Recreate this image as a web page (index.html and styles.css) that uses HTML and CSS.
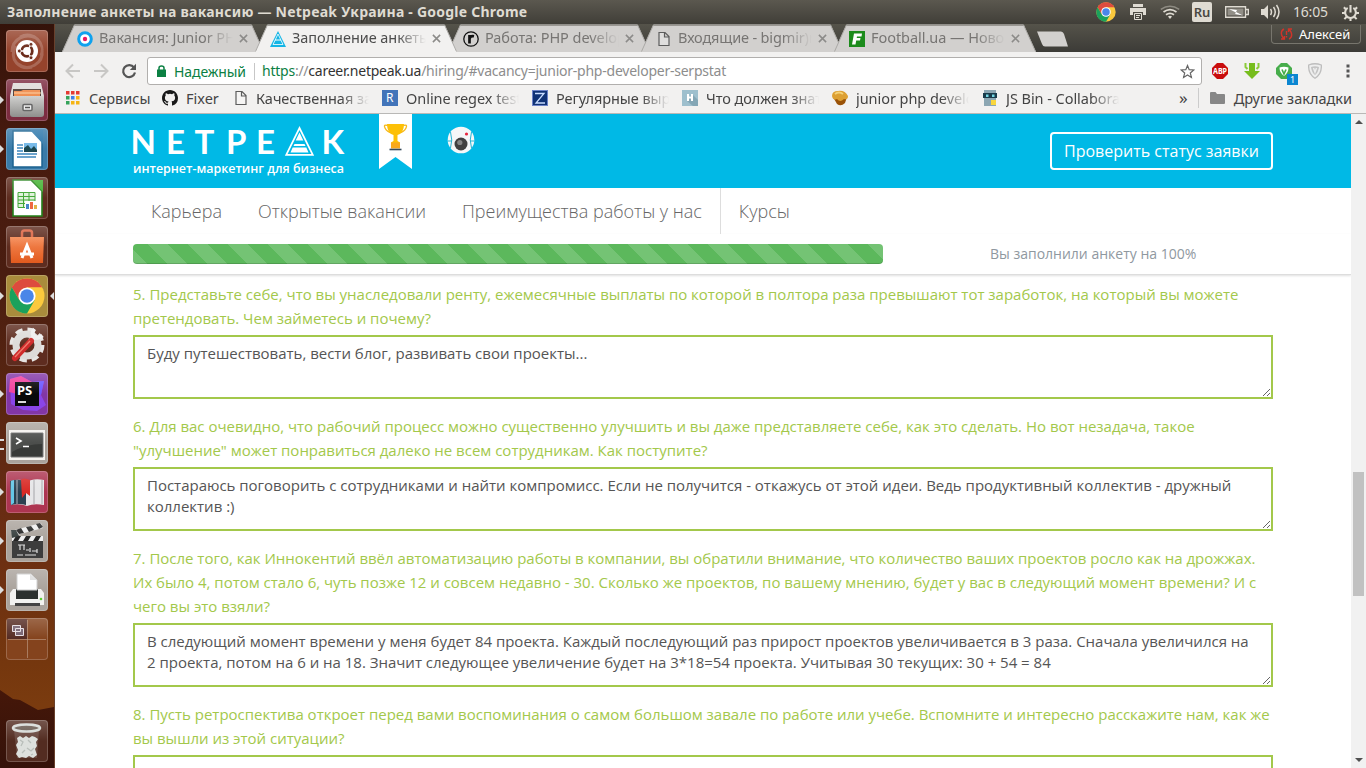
FILE: index.html
```html
<!DOCTYPE html>
<html lang="ru">
<head>
<meta charset="utf-8">
<title>Заполнение анкеты на вакансию — Netpeak Украина</title>
<link rel="stylesheet" href="styles.css">
</head>
<body>
<svg class="defs" width="0" height="0">
  <defs>
    <linearGradient id="steel" x1="0" y1="0" x2="0" y2="1"><stop offset="0" stop-color="#d0d0ce"/><stop offset="1" stop-color="#8f8f8d"/></linearGradient>
    <linearGradient id="bag" x1="0" y1="0" x2="0" y2="1"><stop offset="0" stop-color="#f58a55"/><stop offset="1" stop-color="#e25a1e"/></linearGradient>
    <symbol id="chrome" viewBox="0 0 36 36">
      <circle cx="18" cy="18" r="17.5" fill="#fbc93d"/>
      <path d="M2.8 9.3A17.5 17.5 0 0 1 33.2 9.3H18L10.4 22.3Z" fill="#dd4b3e"/>
      <path d="M2.8 9.3A17.5 17.5 0 0 0 18 35.5L25.6 22.3H10.4Z" fill="#1ba15c"/>
      <circle cx="18" cy="18" r="8.6" fill="#fff"/><circle cx="18" cy="18" r="6.8" fill="#4a86e8"/>
    </symbol>
    <symbol id="tabshape" viewBox="0 0 202 28"><path d="M0 28 12 1.5H190L202 28Z" fill="currentColor"/><path d="M.5 27.5 12.5.8H189.5L201.5 27.5" fill="none" stroke="#aaa8a5"/></symbol>
    <symbol id="close" viewBox="0 0 10 10"><path d="M1 1 9 9M9 1 1 9" stroke="#8c8b89" stroke-width="1.7"/></symbol>
    <symbol id="page" viewBox="0 0 12 16"><path d="M1 1.5H7L11 5.5V14.5H1ZM6.5 1.5V6H11" fill="#fff" fill-opacity=".3" stroke="#5c5c5c" stroke-width="1.2"/></symbol>
  </defs>
</svg>

<header class="panel">
  <span class="panel-title">Заполнение анкеты на вакансию — Netpeak Украина - Google Chrome</span>
  <div class="indicators">
    <svg width="20" height="20"><use href="#chrome"/></svg>
    <svg class="ind-print" width="16" height="16" viewBox="0 0 16 16"><path d="M3 0H13V3H3ZM0 4H16V11H13V8H3V11H0Z" fill="#dfdbd2"/><path d="M4.500 9.500H11.500V15.500H4.500ZM6 11.500H10M6 13.500H9" fill="none" stroke="#dfdbd2"/></svg>
    <svg class="ind-wifi" width="20" height="14" viewBox="0 0 20 14"><path d="M8 11.500 10 14 12 11.500Q10 10 8 11.500Z" fill="#dfdbd2"/><path d="M6 9.800Q10 6.800 14 9.800M3.500 7Q10 2.300 16.500 7" fill="none" stroke="#dfdbd2" stroke-width="1.700"/><path d="M.8 4.300Q10-2 19.200 4.300" fill="none" stroke="#8e8b82" stroke-width="1.500"/></svg>
    <span class="ind-lang">Ru</span>
    <svg class="ind-bat" width="24" height="12" viewBox="0 0 24 12"><path d="M.7.700H20.500V11.300H.7ZM21 3.500H23.300V8.500H21" fill="none" stroke="#dfdbd2" stroke-width="1.400"/><path d="M2.500 2.500H18.500V9.500H2.500Z" fill="#928f87"/><path d="M4 3 12 4 11 6 18 9.500 10 8 11 6.500Z" fill="#fff"/></svg>
    <svg class="ind-vol" width="20" height="16" viewBox="0 0 20 16"><path d="M0 5H3L7 1V15L3 11H0Z" fill="#dfdbd2"/><path d="M9.500 5Q11.500 8 9.500 11M12.500 3Q16 8 12.500 13M15.500 1Q20.500 8 15.500 15" fill="none" stroke="#dfdbd2" stroke-width="1.500"/></svg>
    <span class="ind-clock">16:05</span>
    <svg class="ind-gear" width="17" height="17" viewBox="0 0 18 18"><path d="M6 4.200A5.700 5.700 0 1 0 12 4.200" fill="none" stroke="#dfdbd2" stroke-width="2.200"/><path d="M9 1V9M2 3.500 4.500 6M16 3.500 13.500 6M0 9.500H3.500M14.500 9.500H18M2.500 16 5 13.500M15.500 16 13 13.500M9 15V18" stroke="#dfdbd2" stroke-width="2.200"/></svg>
  </div>
</header>

<div class="desktop">
<nav class="launcher">
  <div class="tile t-dash"><svg viewBox="0 0 42 42"><path d="M6 22C6 8 20 3 30 8M36 20C38 34 22 42 12 34M14 7C28 0 40 14 35 26M10 16C2 30 14 40 26 37" fill="none" stroke="#fff" stroke-opacity=".2" stroke-width="3"/><circle cx="21" cy="21" r="11" fill="#fff"/><circle cx="21" cy="21" r="5.300" fill="none" stroke="#6b2b1b" stroke-width="2.800"/><path d="M21 21 10 21M21 21 26.500 12M21 21 26.500 30" stroke="#fff" stroke-width="1.300"/><circle cx="13.300" cy="21" r="1.900" fill="#6b2b1b" stroke="#fff" stroke-width=".8"/><circle cx="25" cy="14.300" r="1.900" fill="#6b2b1b" stroke="#fff" stroke-width=".8"/><circle cx="25" cy="27.700" r="1.900" fill="#6b2b1b" stroke="#fff" stroke-width=".8"/></svg></div>
  <div class="tile t-files run"><svg viewBox="0 0 42 42"><path d="M7 4H35L38 17H4Z" fill="#dedcd9"/><path d="M7 10H35V19H7Z" fill="#4b3932"/><path d="M8 12H15L17 11H34V19H8Z" fill="#ef8a4a"/><path d="M8 14H35" stroke="#ffd0a0"/><path d="M4 17H38V35Q38 38 35 38H7Q4 38 4 35Z" fill="url(#steel)"/><rect x="17" y="25.500" width="9" height="6" rx="1" fill="#eee" stroke="#666" stroke-width="1.500"/><path d="M19 28.500H24" stroke="#555" stroke-width="1.500"/></svg></div>
  <div class="tile t-writer run"><svg viewBox="0 0 42 42"><path d="M7 3H27L36 13V39H7Z" fill="#fff" stroke="#1d6390" stroke-width="1.500"/><path d="M24 2H37V16Z" fill="#2f79ac"/><path d="M11 17H17M11 20H17M11 23H17M11 26H31M11 29H30" stroke="#3d87bd" stroke-width="1.700"/><path d="M18 15H31V24H18Z" fill="#74b8e8"/><path d="M18 24V20L22 17 25 21 28 18 31 22V24Z" fill="#1b4750"/></svg></div>
  <div class="tile t-dark"><svg viewBox="0 0 42 42"><path d="M7 3H25L36 14V39H7Z" fill="#fff" stroke="#238119" stroke-width="1.600"/><path d="M26 3H37V15Z" fill="#44b233"/><path d="M12 15.500H29V30.500H12ZM12 19.500H29M12 23H29M12 26.500H29M17.500 15V31M23 15V31" fill="#dff2da" stroke="#43a736"/><path d="M19 24H31V32H19Z" fill="#fff"/><path d="M20 27H23V32H20Z" fill="#4787c7"/><path d="M24 25H27V32H24Z" fill="#ed6841"/><path d="M28 28H31V32H28Z" fill="#e1b345"/></svg></div>
  <div class="tile t-dark"><svg viewBox="0 0 42 42"><path d="M16 13V7Q16 4.500 18.500 4.500H23.500Q26 4.500 26 7V13" fill="none" stroke="#dc6240" stroke-width="2.500"/><path d="M4 11H38L37 37H5Z" fill="url(#bag)"/><path d="M16 32 21 19.500 26 32M14 28H28" fill="none" stroke="#fff" stroke-width="3"/></svg></div>
  <div class="tile t-chrome run active"><svg viewBox="0 0 42 42"><use href="#chrome" x="3" y="3" width="36" height="36"/></svg></div>
  <div class="tile t-dark"><svg viewBox="0 0 42 42"><circle cx="21" cy="21" r="15" fill="none" stroke="#e6e4e2" stroke-width="5" stroke-dasharray="7 4.780"/><circle cx="21" cy="21" r="11" fill="none" stroke="#dddbd9" stroke-width="7"/><path d="M24 17 30 11" stroke="#eee" stroke-width="5"/><path d="M28.500 5Q25 9 28 12.500T36.500 11.500" fill="none" stroke="#eee" stroke-width="4"/><path d="M9 34 25 17" stroke="#cf2a2a" stroke-width="6" stroke-linecap="round"/><path d="M9 33 24 17" stroke="#ef7c6c" stroke-width="1.300"/></svg></div>
  <div class="tile t-storm run"><svg viewBox="0 0 42 42"><path d="M4 6 15 3 26 9 38 8 35 22 40 32 31 38 17 37 5 31Z" fill="#8a45e8"/><path d="M4 6 15 3 26 9 15 22 3 19Z" fill="#f0409d"/><path d="M26 9 38 8 35 22 26 20Z" fill="#6b57ff"/><path d="M9 9H33V33H9Z" fill="#08080a"/><path d="M12 29H20" stroke="#fff" stroke-width="1.700"/><text x="11" y="21.500" class="storm-text">PS</text></svg></div>
  <div class="tile t-light run2"><svg viewBox="0 0 42 42"><path d="M3 8H39V38H3Z" fill="#f5f3ef"/><path d="M5 11H37V35H5Z" fill="#383a38" stroke="#777"/><path d="M6 12H36V22Q20 22 6 30Z" fill="#fff" fill-opacity=".1"/><path d="M10 16 15 19 10 22M17 24.500H23" fill="none" stroke="#fff" stroke-width="1.600"/></svg></div>
  <div class="tile t-red run"><svg viewBox="0 0 42 42"><path d="M4 10Q16 7 21 11Q27 7 38 9V34Q28 32 21 35Q14 32 5 34Z" fill="#e6e6e8"/><path d="M4 10Q14 7 20 11V34Q13 32 5 34Z" fill="#2b4050"/><path d="M5 10 8 9V32L5 34Z" fill="#65c7e7"/><path d="M11 9V33" stroke="#87929c" stroke-width="1.500"/><path d="M28 9V33M36 9V33" stroke="#c5c5c8" stroke-width="2"/><path d="M15 9Q17 6 24 9V25L20 22 16 27Z" fill="#d92a25"/></svg></div>
  <div class="tile t-light run"><svg viewBox="0 0 42 42"><path d="M6 17H37V38H6Z" fill="#3d3d3d"/><path d="M5 11 35 3 37 8 7 16Z" fill="#eee"/><path d="M10 10 15 8 18 13 13 14ZM20 7 25 6 28 10 23 12ZM30 4 34 3 37 7 33 9Z" fill="#222"/><path d="M6 16H37V21H6Z" fill="#eee"/><path d="M10 16H15L12 21H7ZM20 16H25L22 21H17ZM30 16H35L32 21H27Z" fill="#222"/><path d="M12 25H19M14 25V30M18 25V30M20 30H23M24 28V32M26 31H31M31 29V33M11 35H17M19 35H30" fill="none" stroke="#ddd" stroke-width="1.200"/><path d="M5 10H10L13 16 6 18Z" fill="#353d3c"/></svg></div>
  <div class="tile t-light run"><svg viewBox="0 0 42 42"><path d="M7 20H35L38 24V36H4V24Z" fill="#f2f2f0"/><path d="M10 20H32V30H10Z" fill="#2b302e"/><path d="M11 5H25L31 11V21H11Z" fill="#fff" stroke="#ccc"/><path d="M24 5V11H31Z" fill="#ddd"/><path d="M9 35.500H34" stroke="#444" stroke-width="3"/><circle cx="35" cy="30" r="1.300" fill="#5cd133"/></svg></div>
  <div class="tile t-ws"><svg viewBox="0 0 42 42"><path d="M1 1H21V21H1Z" fill="#422126" fill-opacity=".7"/><path d="M21.500 2V40M2 21.500H40" stroke="#c1a18c" stroke-opacity=".6"/><path d="M6.500 7.500H14.500V13.500H6.500ZM9.500 10.500H17.500V17.500H9.500Z" fill="#756170" stroke="#e5dde2"/></svg></div>
  <div class="tile t-trash"><svg viewBox="0 0 42 42"><path d="M8 10H33L31 38H11Z" fill="#e3e7e4" fill-opacity=".15"/><ellipse cx="20.500" cy="8" rx="13.500" ry="3.500" fill="#6a5b52" stroke="#d7dbd8" stroke-width="2.500"/><path d="M11 18 14 16 17 18 20 16 23 18 26 16 29 17 32 19 30 22 31 26 29 29 31 35 27 38 23 36 20 38 16 37 13 38 10 34 12 30 10 25 12 22Z" fill="#dde0dd"/><path d="M14 20 17 22 15 26M22 20 25 23M28 28 25 31 21 28M16 33 19 30M25 35 27 34" fill="none" stroke="#b9beba" stroke-width="1.300"/></svg></div>
</nav>

<main class="window">
  <div class="tabstrip">
    <div class="tab"><svg class="tab-bg"><use href="#tabshape"/></svg>
      <svg class="fav" viewBox="0 0 16 16"><circle cx="8" cy="8" r="6.300" fill="#fff" stroke="#0fa1ee" stroke-width="3"/><circle cx="8" cy="8" r="2.200" fill="#ec1863"/></svg>
      <span class="tab-label">Вакансия: Junior PHP</span><svg class="x"><use href="#close"/></svg></div>
    <div class="tab current"><svg class="tab-bg"><use href="#tabshape"/></svg>
      <svg class="fav" viewBox="0 0 16 16"><path d="M8 0 16 16H0Z" fill="#13b5e5"/><path d="M8 3 3 13.500H13Z" fill="none" stroke="#fff" stroke-width=".8"/><path d="M5 9H11" stroke="#fff"/></svg>
      <span class="tab-label">Заполнение анкеты</span><svg class="x"><use href="#close"/></svg></div>
    <div class="tab"><svg class="tab-bg"><use href="#tabshape"/></svg>
      <svg class="fav" viewBox="0 0 16 16"><circle cx="8" cy="8" r="7.200" fill="#d2d0ce" stroke="#111" stroke-width="1.300"/><path d="M6.500 12.500V4M6.500 7.500Q7.500 4.500 11 5.200" fill="none" stroke="#111" stroke-width="2.700"/></svg>
      <span class="tab-label">Работа: PHP developer</span><svg class="x"><use href="#close"/></svg></div>
    <div class="tab"><svg class="tab-bg"><use href="#tabshape"/></svg>
      <svg class="fav"><use href="#page"/></svg>
      <span class="tab-label wide">Входящие - bigmir)net</span><svg class="x"><use href="#close"/></svg></div>
    <div class="tab"><svg class="tab-bg"><use href="#tabshape"/></svg>
      <svg class="fav" viewBox="0 0 16 16"><path d="M0 0H16V16H0Z" fill="#1c8b1b"/><path d="M5 2.500H13L12.500 5.500H8L7.700 7H11.500L11 9.500H7.200L6.500 13.500H3Z" fill="#fff"/></svg>
      <span class="tab-label">Football.ua — Новости</span><svg class="x"><use href="#close"/></svg></div>
    <svg class="newtab" viewBox="0 0 34 16"><path d="M1 .5H25Q27 .5 28 3L32 15.500H9Q7 15.500 6 13Z" fill="#d2d0ce"/></svg>
    <div class="profile"><svg width="13" height="12" viewBox="0 0 13 12"><path d="M4 1Q0 3 2 8L4 11M1 11H4.500V8M9 11Q13 9 11 4L9 1M12 1H8.500V4" fill="none" stroke="#d0342a" stroke-width="1.400"/><path d="M6.500 3V7M6.500 8V9.500" stroke="#d0342a" stroke-width="1.400"/></svg><span>Алексей</span></div>
  </div>

  <div class="toolbar">
    <svg class="nav-ic" width="16" height="16" viewBox="0 0 16 16"><path d="M15 8H2M8 1.500 1.500 8 8 14.500" fill="none" stroke="#c8c7c5" stroke-width="2"/></svg>
    <svg class="nav-ic" width="16" height="16" viewBox="0 0 16 16"><path d="M1 8H14M8 1.500 14.500 8 8 14.500" fill="none" stroke="#c8c7c5" stroke-width="2"/></svg>
    <svg class="nav-ic" width="16" height="16" viewBox="0 0 16 16"><path d="M13 4.500A6 6 0 1 0 14 9.500" fill="none" stroke="#555" stroke-width="2.200"/><path d="M15 .8V7H8.800Z" fill="#555"/></svg>
    <div class="omnibox">
      <svg class="lock" width="9" height="12" viewBox="0 0 9 12"><path d="M0 4.500H9V12H0Z" fill="#0b8043"/><path d="M2 5V3Q2 1 4.500 1T7 3V5" fill="none" stroke="#0b8043" stroke-width="1.500"/></svg>
      <span class="secure">Надежный</span>
      <span class="url"><span class="scheme">https</span>://<span class="host">career.netpeak.ua</span>/hiring/#vacancy=junior-php-developer-serpstat</span>
      <svg class="star" width="15" height="15" viewBox="0 0 15 15"><path d="M7.500 1.500 9.200 5.700 13.800 6 10.300 9 11.400 13.400 7.500 11 3.600 13.400 4.700 9 1.200 6 5.800 5.700Z" fill="none" stroke="#666" stroke-width="1.200"/></svg>
    </div>
    <div class="exts">
      <svg width="16" height="16" viewBox="0 0 16 16"><path d="M5 0H11L16 5V11L11 16H5L0 11V5Z" fill="#c90d0d"/><text x="1" y="11" class="abp" textLength="14" lengthAdjust="spacingAndGlyphs">ABP</text></svg>
      <svg width="16" height="16" viewBox="0 0 16 16"><path d="M5 0H11V8H16L8 16 0 8H5Z" fill="#77bd1d"/><path d="M1.500 0V4L3.500 6M14.500 0V4L12.500 6" fill="none" stroke="#8bcb39" stroke-width="2"/></svg>
      <div class="guard"><svg width="16" height="16" viewBox="0 0 16 16"><path d="M5 0H11L16 5V11L11 16H5L0 11V5Z" fill="#47ad4b"/><path d="M3.500 4.500Q8 3 12.500 4.500Q12.500 10 8 13Q3.500 10 3.500 4.500Z" fill="#fff"/><path d="M6 6.500 8 11 10 6.500" fill="none" stroke="#47ad4b" stroke-width="1.700"/></svg><b class="badge">1</b></div>
      <svg width="14" height="16" viewBox="0 0 14 16"><path d="M.7 2Q7-.5 13.300 2Q14 11 7 15.300Q0 11 .7 2Z" fill="#eee" stroke="#bdbdbd" stroke-width="1.300"/><path d="M3 4Q7 2.500 11 4Q10.500 9 7 12Q3.500 9 3 4Z" fill="#c3c3c3"/><path d="M5.500 5 7 9 8.500 5" fill="none" stroke="#eee" stroke-width="1.500"/></svg>
      <svg class="dots" width="4" height="14" viewBox="0 0 4 14"><path d="M.5.500H3.500V3.500H.5ZM.5 5.500H3.500V8.500H.5ZM.5 10.500H3.500V13.500H.5Z" fill="#555"/></svg>
    </div>
  </div>

  <div class="bookmarks">
    <div class="bm b1"><svg width="14" height="14" viewBox="0 0 14 14"><path d="M0 0H3.500V3.500H0ZM5 0H8.500V3.500H5ZM10 0H13.500V3.500H10Z" fill="#e53a32"/><path d="M0 5H3.500V8.500H0ZM0 10H3.500V13.500H0Z" fill="#35a35a"/><path d="M5 5H8.500V8.500H5Z" fill="#3f7fe8"/><path d="M10 5H13.500V8.500H10ZM10 10H13.500V13.500H10ZM5 10H8.500V13.500H5Z" fill="#f5b413"/></svg><span>Сервисы</span></div>
    <div class="bm b2"><svg width="16" height="16" viewBox="0 0 16 16"><path d="M8 0C3.580 0 0 3.580 0 8c0 3.540 2.290 6.530 5.470 7.590.4.070.55-.17.55-.38 0-.19-.01-.82-.01-1.490-2.010.37-2.530-.49-2.690-.94-.09-.23-.48-.94-.82-1.130-.28-.15-.68-.52-.01-.53.63-.01 1.080.58 1.230.82.720 1.210 1.870.87 2.330.66.070-.52.28-.87.510-1.070-1.780-.2-3.640-.89-3.640-3.950 0-.87.310-1.590.82-2.150-.08-.2-.36-1.020.08-2.120 0 0 .67-.21 2.200.82a7.600 7.600 0 0 1 4 0c1.530-1.040 2.200-.82 2.200-.82.44 1.100.16 1.920.08 2.120.510.560.82 1.270.82 2.150 0 3.070-1.870 3.750-3.650 3.950.29.250.54.730.54 1.480 0 1.070-.01 1.930-.01 2.200 0 .210.150.460.550.380A8 8 0 0 0 16 8c0-4.420-3.580-8-8-8Z" fill="#191919"/></svg><span>Fixer</span></div>
    <div class="bm b3 fade"><svg width="12" height="16"><use href="#page"/></svg><span>Качественная заг</span></div>
    <div class="bm b4 fade"><svg width="16" height="16" viewBox="0 0 16 16"><path d="M0 0H16V16H0Z" fill="#4274b9"/><text x="4" y="12" class="ic-txt">R</text></svg><span>Online regex test</span></div>
    <div class="bm b5 fade"><svg width="16" height="16" viewBox="0 0 16 16"><path d="M0 0H16V16H0Z" fill="#6d82c8"/><path d="M1 1H15V15H1Z" fill="#103276"/><path d="M3 3.500H12L4 13H13" fill="none" stroke="#c8dcff" stroke-width="1.300"/></svg><span>Регулярные выраж</span></div>
    <div class="bm b6 fade"><svg width="16" height="16" viewBox="0 0 16 16"><path d="M0 0H16V16H0Z" fill="#9ebfcd"/><path d="M10 4 16 10V16H11L5 11Z" fill="#84a6b5"/><path d="M6 4V11M10 4V11M6 7.500H10" stroke="#fff" stroke-width="2"/></svg><span>Что должен знать</span></div>
    <div class="bm b7 fade"><svg width="16" height="16" viewBox="0 0 16 16"><path d="M1 7 5 14Q9 17 13 13L15 7Z" fill="#9a5207"/><path d="M0 6Q0 1 6 1Q13 0 16 6Q16 10 12 9Q8 13 5 9Q1 11 0 6Z" fill="#dda032"/><path d="M3 4Q7 1 11 4" stroke="#f5d277" stroke-width="2" fill="none"/></svg><span>junior php develop</span></div>
    <div class="bm b8 fade"><svg width="14" height="16" viewBox="0 0 14 16"><path d="M1 0H13V16H1Z" fill="#8ca6b2"/><path d="M0 3H14V8H0Z" fill="#193b4a"/><path d="M3 4.500H5.500V7H3ZM9 4.500H11.500V7H9Z" fill="#75d8e6"/><path d="M8 10H13V15H8Z" fill="#f9d63d"/></svg><span>JS Bin - Collaborat</span></div>
    <span class="more">»</span>
    <div class="bm other"><svg width="15" height="12" viewBox="0 0 15 12"><path d="M0 1Q0 0 1 0H5.500L7 2H14Q15 2 15 3V11Q15 12 14 12H1Q0 12 0 11Z" fill="#878787"/></svg><span>Другие закладки</span></div>
  </div>

  <div class="viewport">
    <div class="site">
      <div class="site-header">
        <svg class="logo" width="212" height="52" viewBox="0 0 212 52">
          <text class="logo-text" y="30" x="-2.500 33 61.500 93 123">NETPE</text><text class="logo-text" y="30" x="188.500">K</text>
          <path d="M166.500 4 179.800 30.800H153.200Z" fill="none" stroke="#fff" stroke-width="1.700"/><path d="M166.500 8.500 170.300 16.500H162.700ZM161.500 20H171.500L172.500 22H160.500ZM159.700 23.500H173.300L175.500 28.500H157.500Z" fill="#fff"/>
          <text class="logo-tag" x="0" y="49" textLength="211" lengthAdjust="spacingAndGlyphs">интернет-маркетинг для бизнеса</text>
        </svg>
        <svg class="ribbon" width="33" height="55" viewBox="0 0 33 55"><path d="M0 0H33V55L16.500 43 0 55Z" fill="#fff"/><path d="M9 11.500Q4 10 6 14 8 18 13 19M24 11.500Q29 10 27 14 25 18 20 19" fill="none" stroke="#f6b91c" stroke-width="1.400"/><path d="M8 10H25Q25 19 18.500 21V27L21 28.500V34H12V28.500L14.500 27V21Q8 19 8 10Z" fill="#fdc006"/><path d="M12 28.500H21V34.500H12Z" fill="#f8a91d"/><path d="M10.500 35.500H22.500" stroke="#34495b" stroke-width="1.600"/></svg>
        <svg class="robot" width="28" height="28" viewBox="0 0 28 28"><circle cx="14" cy="14" r="13.300" fill="#f5f7f8"/><path d="M3.500 6Q6 14 3.500 22M24.500 6Q22 14 24.500 22M1 15H5M23 15H27" fill="none" stroke="#25b5d5"/><circle cx="14" cy="18" r="6.500" fill="#404040"/><circle cx="12.800" cy="16.500" r="2.600" fill="#848484"/><circle cx="19.500" cy="8" r="1.600" fill="#e8273f"/></svg>
        <a class="status-btn">Проверить статус заявки</a>
      </div>
      <div class="site-nav"><a>Карьера</a><a>Открытые вакансии</a><a>Преимущества работы у нас</a><a class="sep">Курсы</a></div>
      <div class="progress-row"><div class="bar"></div><span>Вы заполнили анкету на 100%</span></div>
      <div class="form">
        <label>5. Представьте себе, что вы унаследовали ренту, ежемесячные выплаты по которой в полтора раза превышают тот заработок, на который вы можете<br>претендовать. Чем займетесь и почему?</label>
        <textarea>Буду путешествовать, вести блог, развивать свои проекты...</textarea>
        <label>6. Для вас очевидно, что рабочий процесс можно существенно улучшить и вы даже представляете себе, как это сделать. Но вот незадача, такое<br>"улучшение" может понравиться далеко не всем сотрудникам. Как поступите?</label>
        <textarea>Постараюсь поговорить с сотрудниками и найти компромисс. Если не получится - откажусь от этой идеи. Ведь продуктивный коллектив - дружный
коллектив :)</textarea>
        <label>7. После того, как Иннокентий ввёл автоматизацию работы в компании, вы обратили внимание, что количество ваших проектов росло как на дрожжах.<br>Их было 4, потом стало 6, чуть позже 12 и совсем недавно - 30. Сколько же проектов, по вашему мнению, будет у вас в следующий момент времени? И с<br>чего вы это взяли?</label>
        <textarea>В следующий момент времени у меня будет 84 проекта. Каждый последующий раз прирост проектов увеличивается в 3 раза. Сначала увеличился на
2 проекта, потом на 6 и на 18. Значит следующее увеличение будет на 3*18=54 проекта. Учитывая 30 текущих: 30 + 54 = 84</textarea>
        <label>8. Пусть ретроспектива откроет перед вами воспоминания о самом большом завале по работе или учебе. Вспомните и интересно расскажите нам, как же<br>вы вышли из этой ситуации?</label>
        <textarea></textarea>
      </div>
    </div>
    <div class="scrollbar"><i class="up"></i><div class="thumb"></div><i class="down"></i></div>
  </div>
</main>
</div>
</body>
</html>
```
FILE: styles.css
```css
* { box-sizing: border-box; }
body { margin: 0; width: 1366px; height: 768px; overflow: hidden; display: flex; flex-direction: column; font-family: "Open Sans", "Noto Sans", sans-serif; }
svg { display: block; flex: none; }
.defs { position: absolute; }

.panel { height: 24px; flex: none; display: flex; align-items: center; justify-content: space-between; padding: 0 7px; background: linear-gradient(#5b584f, #403e38); color: #dfdbd2; font: 15px/24px "Noto Sans", sans-serif; white-space: nowrap; }
.panel-title { font-weight: 700; font-size: 14px; letter-spacing: .23px; }
.indicators { display: flex; align-items: center; }
.ind-print { margin-left: 14px; }
.ind-wifi { margin-left: 14px; }
.ind-lang { margin-left: 12px; width: 20px; height: 20px; border-radius: 2px; background: #dfdbd2; color: #4a4842; font-size: 13px; font-weight: 600; line-height: 20px; text-align: center; }
.ind-bat { margin-left: 13px; }
.ind-vol { margin-left: 12px; }
.ind-clock { margin-left: 12px; width: 36px; font-size: 14px; letter-spacing: -.2px; }
.ind-gear { margin-left: 13px; }

.desktop { flex: 1; display: flex; min-height: 0; }

.launcher { position: relative; z-index: 0; width: 55px; flex: none; display: flex; flex-direction: column; gap: 7px; padding: 6px 0 6px 6px; border-right: 1px solid #69402c; background: linear-gradient(to bottom, #34130a 0, #471a0e 120px, #4a1d10 250px, #592611 380px, #6a2d13 500px, #75370e 640px, #7a3b0f 680px); }
.launcher::after { content: ""; position: absolute; z-index: -1; left: 0; right: 0; bottom: 0; height: 78px; background: linear-gradient(#451709, #35120a); clip-path: polygon(0 0, 13px 9px, 20px 10px, 38px 20px, 54px 17px, 54px 100%, 0 100%); }
.tile { position: relative; width: 42px; height: 42px; flex: none; border-radius: 4px; box-shadow: inset 0 0 0 1px rgba(255,255,255,.2); }
.tile::after { content: ""; position: absolute; inset: 0; border-radius: 4px; background: linear-gradient(rgba(255,255,255,.2), rgba(255,255,255,0) 50%); }
.tile svg { width: 42px; height: 42px; }
.t-dash { background: #95432c; }
.t-files { background: #7c2c40; }
.t-writer { background: #397ba9; }
.t-dark { background: #5e2c1f; }
.t-chrome { background: #a98c3c; }
.t-storm { background: #8236a6; }
.t-light { background: #aaa39c; }
.t-red { background: #ad3551; }
.t-ws { background: #84431d; }
.t-trash { background: #532c21; margin-top: auto; }
.run::before, .run2::before { content: ""; position: absolute; left: -6px; top: 17px; border: 4px solid transparent; border-left-color: #ddd; border-right: 0; }
.run2::before { border: solid #ddd; border-width: 2px 0; width: 4px; height: 7px; }
.active::after { inset: 17px -6px auto auto; border: 4px solid transparent; border-right-color: #ddd; border-left: 0; border-radius: 0; background: none; }
.storm-text { font: 700 13px "Noto Sans", sans-serif; fill: #fff; }

.window { flex: 1; min-width: 0; display: flex; flex-direction: column; background: #f2f1f0; }
.tabstrip { height: 28px; flex: none; display: flex; padding-left: 7px; background: linear-gradient(#55534a, #3c3b37); }
.tab { position: relative; width: 202px; height: 28px; margin-right: -9px; display: flex; align-items: center; padding: 1px 16px 0 15px; color: #d2d0ce; flex: none; }
.tab.current { color: #f2f1f0; z-index: 2; }
.tab-bg { position: absolute; left: 0; top: 0; width: 202px; height: 28px; }
.fav { width: 16px; height: 16px; position: relative; }
.tab-label { position: relative; margin-left: 6px; width: 134px; padding-bottom: 2px; overflow: hidden; white-space: nowrap; color: #777573; font: 14.500px/21px "Noto Sans", sans-serif; letter-spacing: -.05px; -webkit-mask-image: linear-gradient(90deg, #000 105px, transparent 134px); }
.tab-label.wide { letter-spacing: -.15px; }
.current .tab-label { color: #4c4c4c; }
.x { position: relative; width: 9px; height: 9px; margin-left: 6px; }
.newtab { width: 34px; height: 16px; margin: 7px 0 0 9px; }
.profile { margin-left: auto; margin-right: 5px; margin-top: 1px; width: 90px; height: 19px; display: flex; align-items: center; gap: 6px; padding-left: 8px; border: 1px solid #77756d; border-top: 0; border-radius: 0 0 4px 4px; color: #fff; font: 13px/19px "Noto Sans", sans-serif; }

.toolbar { height: 36px; flex: none; display: flex; align-items: center; padding: 2px 0 0 10px; }
.nav-ic { margin-right: 12px; }
.omnibox { width: 1055px; height: 28px; margin-left: -2px; display: flex; align-items: center; padding: 0 6px 0 9px; border: 1px solid #b1afad; border-radius: 3px; background: #fff; font: 14px/26px "Noto Sans", sans-serif; white-space: nowrap; }
.secure { margin-left: 8px; padding-right: 8px; color: #0b8043; line-height: 17px; border-right: 1px solid #c7c7c7; width: 81px; letter-spacing: -.1px; }
.url { margin-left: 7px; color: #8d8d8d; letter-spacing: -.24px; }
.scheme { color: #0b8043; }
.host { color: #333; }
.star { margin-left: auto; }
.exts { display: flex; align-items: center; margin-left: 10px; gap: 16px; }
.exts .dots { margin-left: 8px; }
.abp { font: 700 8px "Noto Sans", sans-serif; fill: #fff; }
.guard { position: relative; }
.badge { position: absolute; left: 11px; top: 11px; width: 11px; height: 11px; background: #0b86d1; color: #fff; font: 9px/11px "Noto Sans", sans-serif; text-align: center; }

.bookmarks { height: 26px; flex: none; display: flex; align-items: center; padding: 0 14px 5px 11px; border-bottom: 1px solid #b9b8b6; color: #444; font: 14.500px/20px "Noto Sans", sans-serif; white-space: nowrap; }
.bm { display: flex; align-items: center; gap: 9px; flex: none; }
.b1 { width: 96px; }
.b2 { width: 73px; gap: 8px; }
.b3 { width: 147px; }
.b4 { width: 150px; gap: 8px; }
.b5 { width: 150px; gap: 8px; }
.b6 { width: 150px; gap: 8px; }
.b7 { width: 151px; gap: 8px; }
.b8 { width: 136px; }
.fade span { width: 113px; overflow: hidden; letter-spacing: -.05px; -webkit-mask-image: linear-gradient(90deg, #000 85px, transparent 113px); }
.ic-txt { font: 12px "Noto Sans", sans-serif; fill: #fff; }
.more { margin-left: auto; margin-right: 10px; font-size: 17px; line-height: 18px; }
.other { padding-left: 11px; border-left: 1px solid #ccc; }

.viewport { flex: 1; min-height: 0; display: flex; background: #fff; }
.site { width: 1296px; flex: none; overflow: hidden; }
.site-header { height: 74px; background: #00b9e6; display: flex; padding: 0 78px; align-items: flex-start; }
.logo { margin-top: 10px; overflow: visible; }
.logo-text { font: 700 33px Lato, sans-serif; fill: #fff; }
.logo-tag { font: 600 13px "Open Sans", sans-serif; fill: #fff; }
.ribbon { margin-left: 34px; }
.robot { margin: 12px 0 0 35px; }
.status-btn { margin: 18px 0 0 auto; width: 223px; height: 38px; border: 2px solid #fff; border-radius: 4px; color: #fff; font-size: 16px; line-height: 34px; text-align: center; white-space: nowrap; }
.site-nav { height: 46px; display: flex; padding-left: 78px; font-size: 18px; font-weight: 300; line-height: 46px; color: #666; white-space: nowrap; }
.site-nav a { padding: 0 18px; }
.site-nav .sep { border-left: 1px solid #ddd; }
.progress-row { height: 41px; display: flex; padding: 10px 0 0 78px; border-bottom: 1px solid #ddd; box-shadow: 0 1px 2px rgba(0,0,0,.12); color: #8f989f; font-size: 14px; line-height: 20px; }
.progress-row span { margin-left: 107px; }
.bar { width: 750px; height: 20px; border-radius: 4px; background: #5cb85c linear-gradient(45deg, rgba(255,255,255,.15) 25%, transparent 25%, transparent 50%, rgba(255,255,255,.15) 50%, rgba(255,255,255,.15) 75%, transparent 75%) 15px 0 / 40px 40px; box-shadow: inset 0 -1px 0 rgba(0,0,0,.15); }
.form { width: 1218px; padding: 7px 0 0 78px; }
.form label { display: block; color: #a3c84b; font-size: 15px; line-height: 24px; white-space: nowrap; letter-spacing: -.008px; }
.form textarea { display: block; width: 1140px; height: 64px; margin: 5px 0 15px; padding: 6px 12px; border: 2px solid #a3c84b; background: #fff; color: #555; font: 15px/21px "Open Sans", sans-serif; letter-spacing: -.008px; white-space: pre; overflow: hidden; resize: both; outline: 0; }

.scrollbar { width: 15px; display: flex; flex-direction: column; align-items: center; background: #f1f1f1; padding: 6px 0; }
.up { border: 4px solid transparent; border-top: 0; border-bottom-color: #505050; }
.thumb { margin-top: 348px; width: 11px; height: 124px; background: #c1c1c1; }
.down { margin-top: auto; border: 4px solid transparent; border-bottom: 0; border-top-color: #505050; }
```
